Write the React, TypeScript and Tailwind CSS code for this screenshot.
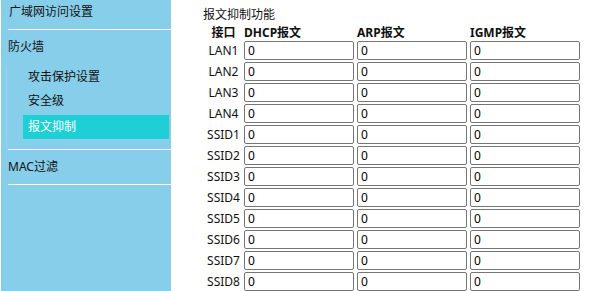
const rows = ['LAN1', 'LAN2', 'LAN3', 'LAN4', 'SSID1', 'SSID2', 'SSID3', 'SSID4', 'SSID5', 'SSID6', 'SSID7', 'SSID8'];

function Cell() {
  return (
    <input
      readOnly
      value="0"
      className="h-[19px] w-[110px] rounded-[2px] border border-[#767676] bg-white px-[3px] text-[12px] leading-[17px] text-black outline-none"
    />
  );
}

export default function App() {
  return (
    <div
      className="flex h-[291px] w-[616px] overflow-hidden bg-white text-[12px] text-[#111]"
      style={{ fontFamily: '"Noto Sans", "Noto Sans CJK SC", sans-serif' }}
    >
      {/* Sidebar */}
      <div className="ml-px h-full w-[170px] shrink-0 bg-[#87ceeb]">
        <div className="h-[29px] pl-[8px] pt-[4px] leading-[16px]">广域网访问设置</div>
        <div className="ml-[7px] h-px bg-white" />
        <div className="h-[35px] pl-[7px] pt-[9px] leading-[16px]">防火墙</div>
        <div className="ml-[5px] h-[84px] border-l border-[#9bd5ec] pr-[2px]">
          <div className="h-[24px] pl-[21px] leading-[24px]">攻击保护设置</div>
          <div className="h-[24px] pl-[21px] leading-[24px]">安全级</div>
          <div className="ml-[16px] mt-[2px] h-[24px] bg-[#1ecfd6] pl-[5px] leading-[24px] text-white">报文抑制</div>
        </div>
        <div className="ml-[7px] h-px bg-white" />
        <div className="h-[34px] pl-[7px] pt-[9px] leading-[16px]">MAC过滤</div>
        <div className="ml-[7px] h-px bg-white" />
      </div>

      {/* Content */}
      <div className="flex flex-col pl-[32px] pt-[7px]">
        <div className="h-[16px] leading-[16px]">报文抑制功能</div>
        <div className="ml-[3px] mt-[1px] flex h-[17px] items-center gap-[3px] font-bold">
          <div className="w-[35px] text-center">接口</div>
          <div className="w-[110px] pl-[-2px]">DHCP报文</div>
          <div className="w-[110px]">ARP报文</div>
          <div className="w-[110px]">IGMP报文</div>
        </div>
        <div className="ml-[3px] flex flex-col gap-[2px]">
          {rows.map((r) => (
            <div key={r} className="flex h-[19px] items-center gap-[3px]">
              <div className="w-[35px] text-center leading-[19px]">{r}</div>
              <Cell />
              <Cell />
              <Cell />
            </div>
          ))}
        </div>
      </div>
    </div>
  );
}
